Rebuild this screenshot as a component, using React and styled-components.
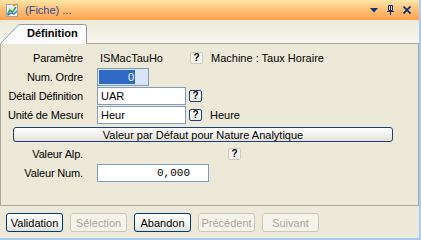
import styled, { createGlobalStyle } from "styled-components";

const GlobalStyle = createGlobalStyle`
  html, body {
    margin: 0;
    padding: 0;
    background: #ece9d8;
  }
  body {
    font-family: "Liberation Sans", Arial, sans-serif;
    font-size: 11px;
    color: #000;
  }
`;

const Window = styled.div`
  width: 421px;
  height: 240px;
  box-sizing: border-box;
  border-right: 2px solid #a9c9f0;
  border-bottom: 2px solid #a9c9f0;
  background: #ece9d8;
  display: flex;
  flex-direction: column;
  overflow: hidden;
`;

const TitleBar = styled.div`
  height: 20px;
  flex-shrink: 0;
  display: flex;
  align-items: center;
  padding: 0 8px 0 5px;
  background: linear-gradient(to bottom, #ffe6a8 0%, #ffc37a 45%, #ffa24c 100%);
`;

const Title = styled.span`
  flex: 1;
  margin-left: 6px;
  color: #1f4f9f;
  font-size: 11px;
`;

const TitleTools = styled.div`
  display: flex;
  align-items: center;
  gap: 9px;
  color: #0d2f78;
`;

const TabStrip = styled.div`
  height: 24px;
  flex-shrink: 0;
  display: flex;
  align-items: flex-end;
  background: linear-gradient(to bottom, #ecead9 0%, #f8f7f2 100%);
`;

const Tab = styled.div`
  position: relative;
  width: 87px;
  height: 20px;
  box-sizing: border-box;
  padding: 3px 0 0 27px;
  font-weight: bold;
`;

const TabShape = styled.svg`
  position: absolute;
  left: 0;
  top: 0;
`;

const TabLabel = styled.span`
  position: relative;
`;

const TabFiller = styled.div`
  flex: 1;
  height: 1px;
  background: #aca899;
`;

const Panel = styled.div`
  height: 162px;
  flex-shrink: 0;
  box-sizing: border-box;
  border: 1px solid #aca899;
  border-top: none;
  padding-top: 4px;
  display: flex;
  flex-direction: column;
`;

const Row = styled.div`
  height: 19px;
  display: flex;
  align-items: center;
`;

const Label = styled.span`
  width: 75px;
  margin-left: 7px;
  margin-right: 14px;
  flex-shrink: 0;
  text-align: right;
  white-space: nowrap;
  overflow: hidden;
  letter-spacing: -0.15px;
`;

const Value = styled.span`
  width: 93px;
  box-sizing: border-box;
  padding-left: 3px;
`;

const TextBox = styled.div`
  width: ${(p) => p.$width}px;
  height: 18px;
  box-sizing: border-box;
  border: 1px solid #7f9db9;
  background: ${(p) => (p.$focused ? "#d9e4f7" : "#fff")};
  padding: 0 ${(p) => (p.$mono ? 18 : 3)}px 0 ${(p) => (p.$focused ? 1 : 3)}px;
  margin-right: 3px;
  display: flex;
  align-items: center;
  justify-content: ${(p) => (p.$mono ? "flex-end" : "flex-start")};
  font-family: ${(p) =>
    p.$mono ? '"Liberation Mono", "Courier New", monospace' : "inherit"};
`;

const Selection = styled.span`
  width: 36px;
  height: 14px;
  line-height: 14px;
  background: #316ac5;
  color: #fff;
  text-align: right;
  padding-right: 1px;
  box-sizing: border-box;
`;

const Help = styled.span`
  width: 13px;
  height: 12px;
  box-sizing: border-box;
  margin-left: ${(p) => p.$left || 0}px;
  border: 1px solid ${(p) => (p.$active ? "#1d3f7a" : "#cfcbbb")};
  border-radius: 2px;
  background: ${(p) =>
    p.$active ? "linear-gradient(#ffffff, #ecebe5)" : "#f4f3ee"};
  display: flex;
  align-items: center;
  justify-content: center;
  font-weight: bold;
  font-size: 10px;
  line-height: 1;
`;

const Side = styled.span`
  margin-left: 8px;
  white-space: nowrap;
`;

const WideButton = styled.div`
  width: 380px;
  height: 15px;
  margin: 3px 0 2px 12px;
  box-sizing: border-box;
  border: 1px solid #1d3f7a;
  border-radius: 3px;
  background: linear-gradient(#ffffff, #f1f0ea 60%, #e3e1d6);
  display: flex;
  align-items: center;
  justify-content: center;
`;

const Footer = styled.div`
  flex: 1;
  display: flex;
  gap: 7px;
  padding: 7px 0 0 6px;
`;

const Button = styled.div`
  width: 57px;
  height: 19px;
  box-sizing: border-box;
  border: 1px solid ${(p) => (p.$disabled ? "#cac8bb" : "#003c74")};
  border-radius: 3px;
  background: ${(p) =>
    p.$disabled ? "#f5f4ea" : "linear-gradient(#ffffff, #f2f1ec 70%, #e2e0d6)"};
  color: ${(p) => (p.$disabled ? "#aca899" : "#000")};
  display: flex;
  align-items: center;
  justify-content: center;
`;

function AppIcon() {
  return (
    <svg width="14" height="15" viewBox="0 0 14 15">
      <rect x="1.5" y="1.5" width="11" height="12" fill="#f4f6f8" stroke="#9aa6b2" />
      <path d="M3 5h7M3 8h7M3 11h7" stroke="#d3dbe4" />
      <path d="M2.5 11.5 L5 7 L7.5 9 L11 4" fill="none" stroke="#3aa140" strokeWidth="1.6" />
      <path d="M2.5 12.5 L6 10 L9 11 L12 8" fill="none" stroke="#2f6fd0" strokeWidth="1.2" />
      <path d="M8 3 L12 1" stroke="#f08a24" strokeWidth="1.5" />
    </svg>
  );
}

function DropIcon() {
  return (
    <svg width="8" height="5" viewBox="0 0 8 5">
      <path d="M0 0h8L4 4.5z" fill="currentColor" />
    </svg>
  );
}

function PinIcon() {
  return (
    <svg width="7" height="10" viewBox="0 0 7 10">
      <path d="M1.5 0.5h4v5h-4z M3.5 0.5v5" fill="none" stroke="currentColor" />
      <path d="M0 6.5h7M3.5 6.5V10" stroke="currentColor" />
    </svg>
  );
}

function CloseIcon() {
  return (
    <svg width="8" height="8" viewBox="0 0 8 8">
      <path d="M0.5 0.5l7 7M7.5 0.5l-7 7" stroke="currentColor" strokeWidth="1.8" />
    </svg>
  );
}

export default function App() {
  return (
    <>
      <GlobalStyle />
      <Window>
        <TitleBar>
          <AppIcon />
          <Title>(Fiche) ...</Title>
          <TitleTools>
            <DropIcon />
            <PinIcon />
            <CloseIcon />
          </TitleTools>
        </TitleBar>

        <TabStrip>
          <Tab>
            <TabShape width="87" height="20" viewBox="0 0 87 20">
              <path d="M0 20 L18 1.5 Q19 0.5 21 0.5 H84.5 Q86.5 0.5 86.5 2.5 V20 Z" fill="#fcfcfe" />
              <path d="M0.5 19.5 L18 1.5 Q19 0.5 21 0.5 H84.5 Q86.5 0.5 86.5 2.5 V20" fill="none" stroke="#919b9c" />
            </TabShape>
            <TabLabel>Définition</TabLabel>
          </Tab>
          <TabFiller />
        </TabStrip>

        <Panel>
          <Row>
            <Label>Paramètre</Label>
            <Value>ISMacTauHo</Value>
            <Help>?</Help>
            <Side>Machine : Taux Horaire</Side>
          </Row>
          <Row>
            <Label>Num. Ordre</Label>
            <TextBox $width={52} $focused>
              <Selection>0</Selection>
            </TextBox>
          </Row>
          <Row>
            <Label>Détail Définition</Label>
            <TextBox $width={89}>UAR</TextBox>
            <Help $active>?</Help>
          </Row>
          <Row>
            <Label>Unité de Mesure</Label>
            <TextBox $width={89}>Heur</TextBox>
            <Help $active>?</Help>
            <Side>Heure</Side>
          </Row>
          <WideButton>Valeur par Défaut pour Nature Analytique</WideButton>
          <Row>
            <Label>Valeur Alp.</Label>
            <Help $left={131}>?</Help>
          </Row>
          <Row>
            <Label>Valeur Num.</Label>
            <TextBox $width={112} $mono>0,000</TextBox>
          </Row>
        </Panel>

        <Footer>
          <Button>Validation</Button>
          <Button $disabled>Sélection</Button>
          <Button>Abandon</Button>
          <Button $disabled>Précédent</Button>
          <Button $disabled>Suivant</Button>
        </Footer>
      </Window>
    </>
  );
}
